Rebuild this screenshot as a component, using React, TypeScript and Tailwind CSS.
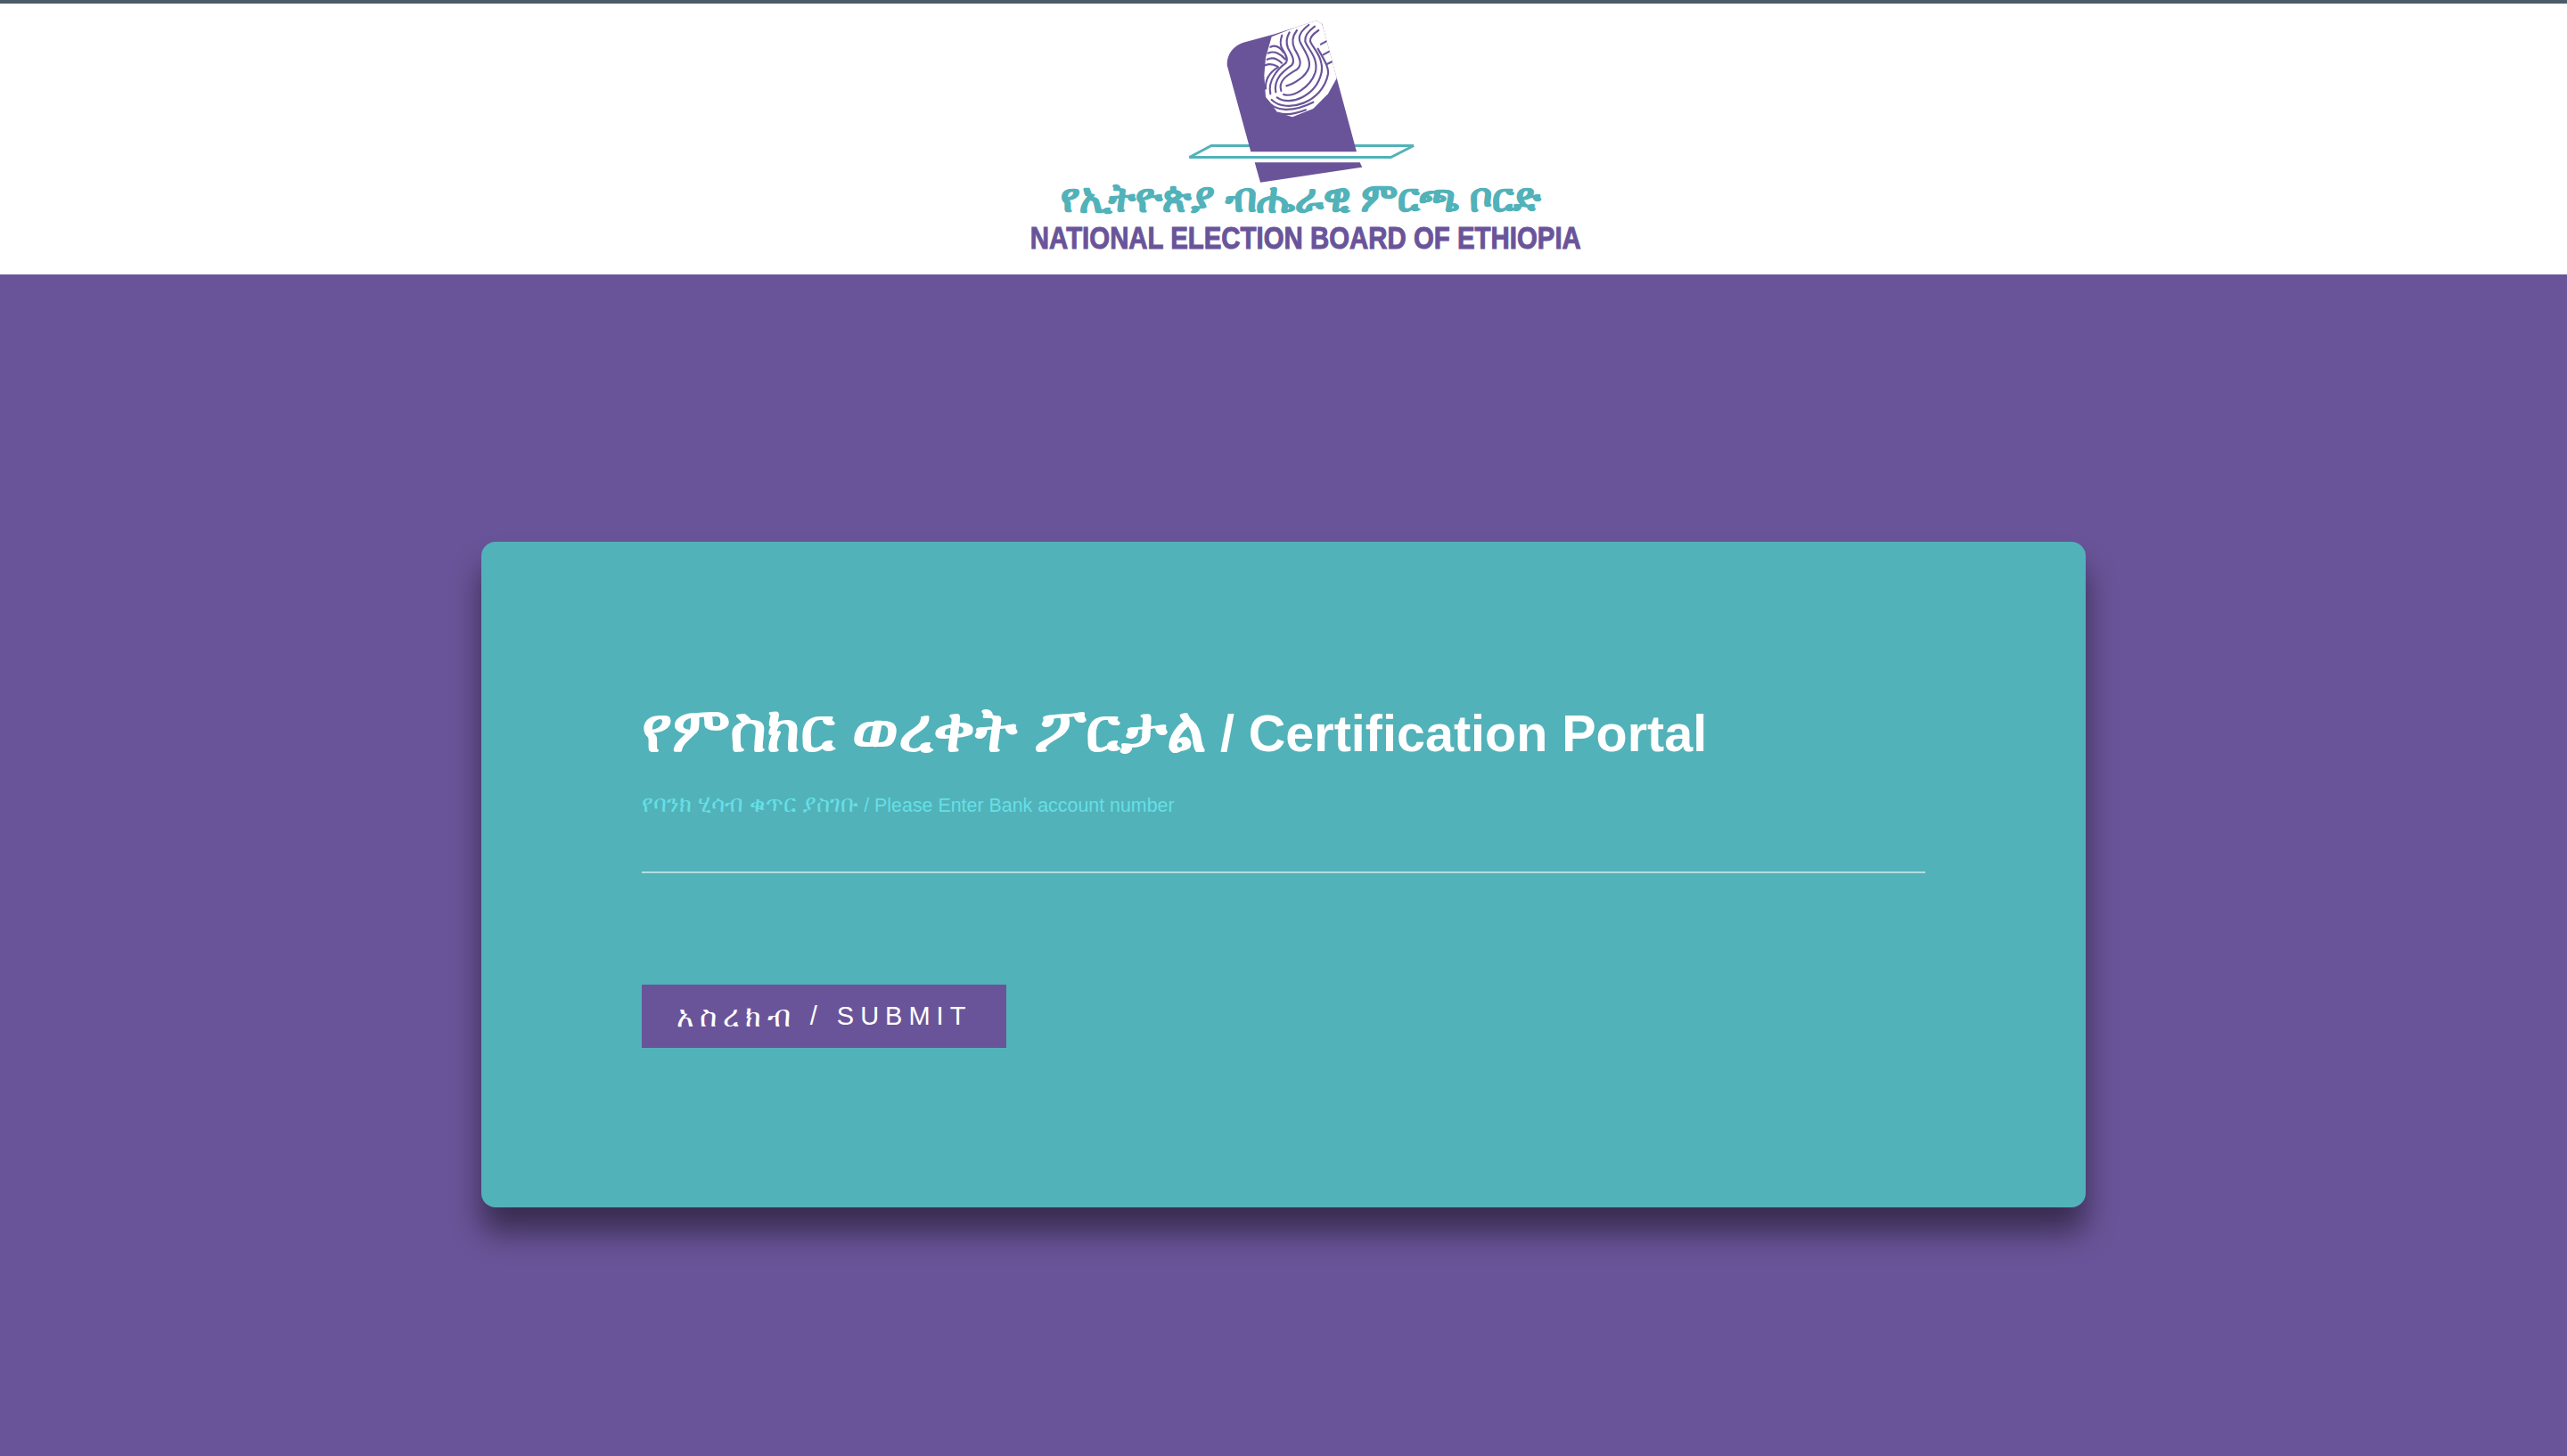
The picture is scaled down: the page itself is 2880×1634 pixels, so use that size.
const sans = "font-['Liberation_Sans','DejaVu_Sans','Noto_Sans',sans-serif]";

function BallotLogo() {
  return (
    <svg viewBox="1330 14 270 192" className="block h-[192px] w-[270px]">
      <defs>
        <clipPath id="ballot">
          <path d="M1376.700 73.300C1376 60 1385 50.700 1395 47.700L1430 38.300L1476.700 23.300L1483.300 26.700L1522 170.300H1403.300Z" />
        </clipPath>
      </defs>
      {/* slot */}
      <path d="M1359 163.500H1586L1560.500 176.500H1334.500Z" fill="none" stroke="#52b2b9" strokeWidth="3" />
      <path d="M1400 170H1526V180H1400Z" fill="#ffffff" />
      <path d="M1376.700 73.300C1376 60 1385 50.700 1395 47.700L1430 38.300L1476.700 23.300L1483.300 26.700L1522 170.300H1403.300Z" fill="#6a5499" />
      <path d="M1334.500 176.500H1560.500" stroke="#52b2b9" strokeWidth="3" />
      <path d="M1407.700 182.300H1525.700L1528.300 187.700L1414 204.700Z" fill="#6a5499" />
      {/* fingerprint */}
      <g clipPath="url(#ballot)">
        <g transform="translate(1410 18) scale(0.33333)">
          <path d="M50 70L195 12L215 16L280 190L240 262L190 312L120 340L70 325L30 272L25 200L30 140Z" fill="#ffffff" />
          <g fill="none" stroke="#6a5499" strokeWidth="6.500" strokeLinecap="round">
            <path d="M100 235C122 230 165 205 175 175C185 145 155 110 145 85C138 65 155 45 175 30" />
            <path d="M82 252C70 215 110 195 135 180C155 165 145 140 128 112C118 92 118 70 135 48" />
            <path d="M90 264C122 275 180 240 197 190C210 140 170 110 163 85C160 65 175 50 195 35" />
            <path d="M64 256C55 205 100 180 118 165C130 150 118 130 105 108C98 90 98 75 110 55" />
            <path d="M68 274C112 305 200 270 218 190C226 140 190 110 180 85C178 72 190 60 208 48" />
            <path d="M50 282C100 330 222 292 240 195C243 170 222 140 206 110" />
            <path d="M46 262C35 215 75 175 98 158C108 145 95 125 85 110C78 95 78 85 85 65" />
            <path d="M72 326C100 336 130 330 165 316" />
            <path d="M36 285C60 322 120 325 190 290" />
            <path d="M30 245C28 215 42 190 72 172" />
            <path d="M38 125C60 115 82 128 96 146" />
            <path d="M35 146C55 136 72 146 84 158" />
            <path d="M28 166C45 158 60 164 70 170" />
            <path d="M46 104C62 96 78 104 90 122" />
            <path d="M246 118L224 130" />
            <path d="M256 152L236 162" />
            <path d="M234 85L216 95" />
          </g>
        </g>
      </g>
    </svg>
  );
}

function Header() {
  return (
    <header className="h-[308px] border-t-[4px] border-[#4c5b69] bg-white">
      <div className="ml-[50px] flex flex-col items-center pt-[10px]">
        <BallotLogo />
        <p className={`${sans} -mt-[3px] mr-[12px] h-[38px] text-[44px] leading-[38px] font-bold whitespace-nowrap text-[#52b2b9] [-webkit-text-stroke:1px_#52b2b9]`}>
          የኢትዮጵያ ብሔራዊ ምርጫ ቦርድ
        </p>
        <p className={`${sans} mt-[6px] h-[40px] scale-x-[0.84] text-[35px] leading-[40px] font-bold whitespace-nowrap text-[#6a5499] [-webkit-text-stroke:1px_#6a5499]`}>
          NATIONAL ELECTION BOARD OF ETHIOPIA
        </p>
      </div>
    </header>
  );
}

export default function App() {
  return (
    <div className={`${sans} flex min-h-[1634px] flex-col bg-[#6a5499]`}>
      <Header />
      <main className="pt-[300px]">
        <section className="mx-auto h-[747px] w-[1800px] rounded-2xl bg-[#52b2b9] px-[180px] pt-[176px] shadow-[0_28px_34px_0_rgba(0,0,0,0.48)]">
          <h1 className="h-[70px] text-[57.500px] leading-[70px] font-bold whitespace-nowrap text-white">
            <span className="text-[70px]">የምስክር ወረቀት ፖርታል</span> / Certification Portal
          </h1>
          <label className="mt-[34px] block h-[28px] text-[21.400px] leading-[28px] whitespace-nowrap text-[#66dfe6]">
            <span className="text-[25.500px]">የባንክ ሂሳብ ቁጥር ያስገቡ</span> / Please Enter Bank account number
          </label>
          <div className="mt-[62px] h-[2px] bg-[#b3dde0]" />
          <button className="mt-[125px] flex h-[71px] w-[409px] items-center justify-center bg-[#6a5499] text-[29px] tracking-[7px] whitespace-nowrap text-white">
            <span className="text-[33px]">አስረክብ</span>&nbsp;/&nbsp;SUBMIT
          </button>
        </section>
      </main>
    </div>
  );
}
